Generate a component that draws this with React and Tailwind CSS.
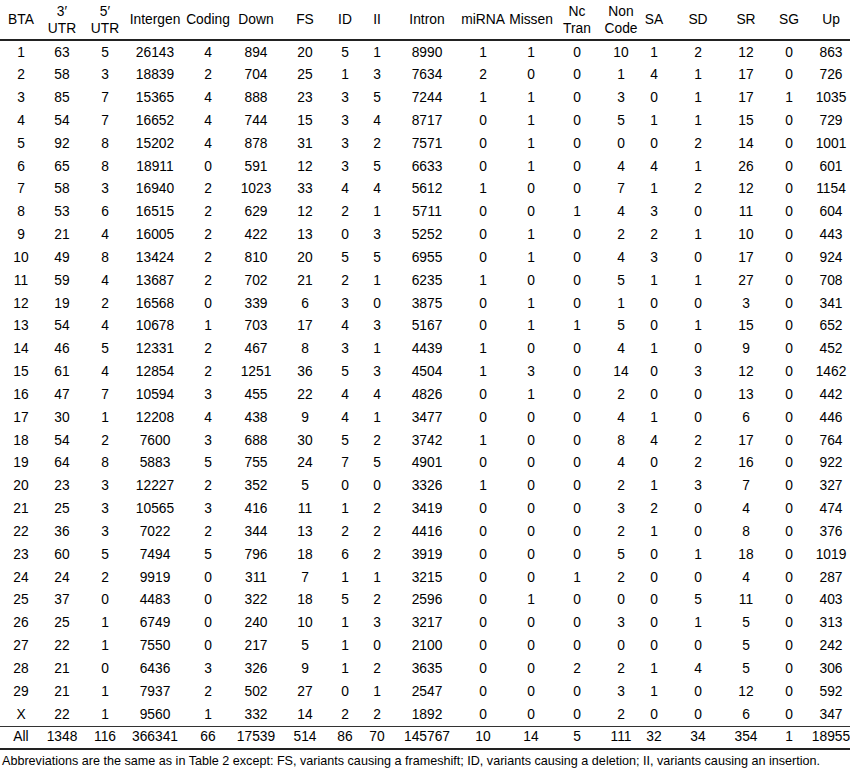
const cols = [
  ['BTA'], ['3′', 'UTR'], ['5′', 'UTR'], ['Intergen'], ['Coding'], ['Down'], ['FS'], ['ID'], ['II'],
  ['Intron'], ['miRNA'], ['Missen'], ['Nc', 'Tran'], ['Non', 'Code'], ['SA'], ['SD'], ['SR'], ['SG'], ['Up'],
];

const rows = [
  '1 63 5 26143 4 894 20 5 1 8990 1 1 0 10 1 2 12 0 863',
  '2 58 3 18839 2 704 25 1 3 7634 2 0 0 1 4 1 17 0 726',
  '3 85 7 15365 4 888 23 3 5 7244 1 1 0 3 0 1 17 1 1035',
  '4 54 7 16652 4 744 15 3 4 8717 0 1 0 5 1 1 15 0 729',
  '5 92 8 15202 4 878 31 3 2 7571 0 1 0 0 0 2 14 0 1001',
  '6 65 8 18911 0 591 12 3 5 6633 0 1 0 4 4 1 26 0 601',
  '7 58 3 16940 2 1023 33 4 4 5612 1 0 0 7 1 2 12 0 1154',
  '8 53 6 16515 2 629 12 2 1 5711 0 0 1 4 3 0 11 0 604',
  '9 21 4 16005 2 422 13 0 3 5252 0 1 0 2 2 1 10 0 443',
  '10 49 8 13424 2 810 20 5 5 6955 0 1 0 4 3 0 17 0 924',
  '11 59 4 13687 2 702 21 2 1 6235 1 0 0 5 1 1 27 0 708',
  '12 19 2 16568 0 339 6 3 0 3875 0 1 0 1 0 0 3 0 341',
  '13 54 4 10678 1 703 17 4 3 5167 0 1 1 5 0 1 15 0 652',
  '14 46 5 12331 2 467 8 3 1 4439 1 0 0 4 1 0 9 0 452',
  '15 61 4 12854 2 1251 36 5 3 4504 1 3 0 14 0 3 12 0 1462',
  '16 47 7 10594 3 455 22 4 4 4826 0 1 0 2 0 0 13 0 442',
  '17 30 1 12208 4 438 9 4 1 3477 0 0 0 4 1 0 6 0 446',
  '18 54 2 7600 3 688 30 5 2 3742 1 0 0 8 4 2 17 0 764',
  '19 64 8 5883 5 755 24 7 5 4901 0 0 0 4 0 2 16 0 922',
  '20 23 3 12227 2 352 5 0 0 3326 1 0 0 2 1 3 7 0 327',
  '21 25 3 10565 3 416 11 1 2 3419 0 0 0 3 2 0 4 0 474',
  '22 36 3 7022 2 344 13 2 2 4416 0 0 0 2 1 0 8 0 376',
  '23 60 5 7494 5 796 18 6 2 3919 0 0 0 5 0 1 18 0 1019',
  '24 24 2 9919 0 311 7 1 1 3215 0 0 1 2 0 0 4 0 287',
  '25 37 0 4483 0 322 18 5 2 2596 0 1 0 0 0 5 11 0 403',
  '26 25 1 6749 0 240 10 1 3 3217 0 0 0 3 0 1 5 0 313',
  '27 22 1 7550 0 217 5 1 0 2100 0 0 0 0 0 0 5 0 242',
  '28 21 0 6436 3 326 9 1 2 3635 0 0 2 2 1 4 5 0 306',
  '29 21 1 7937 2 502 27 0 1 2547 0 0 0 3 1 0 12 0 592',
  'X 22 1 9560 1 332 14 2 2 1892 0 0 0 2 0 0 6 0 347',
].map((r) => r.split(' '));

const total = 'All 1348 116 366341 66 17539 514 86 70 145767 10 14 5 111 32 34 354 1 18955'.split(' ');

const grid =
  'grid grid-cols-[42px_40px_46px_54px_52px_44px_54px_26px_38px_62px_50px_46px_46px_42px_24px_64px_32px_54px_30px]';

function Cell({ children }) {
  return <div className="flex justify-center items-center whitespace-nowrap">{children}</div>;
}

export default function App() {
  return (
    <div
      className="w-[850px] h-[774px] bg-white text-black text-[13.8px] leading-none overflow-hidden"
      style={{ fontFamily: '"Liberation Sans", Arial, sans-serif' }}
    >
      <div className={`${grid} h-[41px] border-b-2 border-[#222]`}>
        {cols.map((c, i) => (
          <div key={i} className="flex flex-col justify-center items-center leading-[17px] whitespace-nowrap">
            {c.map((t) => (
              <span key={t}>{t}</span>
            ))}
          </div>
        ))}
      </div>
      <div className="border-b border-[#333]">
        {rows.map((r, i) => (
          <div key={i} className={`${grid} h-[22.83px]`}>
            {r.map((v, j) => (
              <Cell key={j}>{v}</Cell>
            ))}
          </div>
        ))}
      </div>
      <div className={`${grid} h-[23px] border-b-2 border-[#222]`}>
        {total.map((v, j) => (
          <Cell key={j}>{v}</Cell>
        ))}
      </div>
      <p className="pl-[2px] pt-[5px] text-[12.6px] text-black">
        Abbreviations are the same as in Table 2 except: FS, variants causing a frameshift; ID, variants causing a
        deletion; II, variants causing an insertion.
      </p>
    </div>
  );
}
